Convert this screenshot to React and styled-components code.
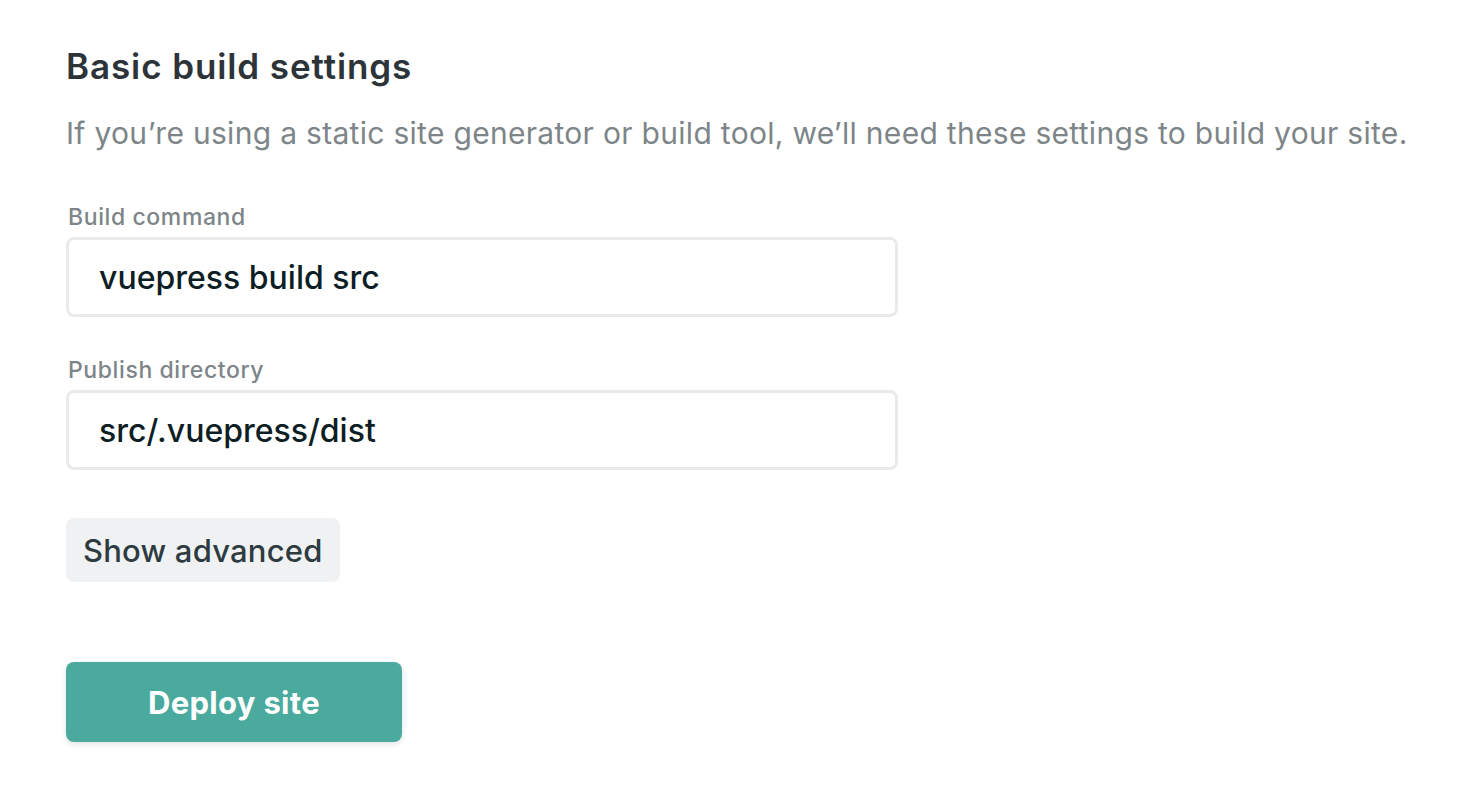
import styled, { createGlobalStyle } from 'styled-components';

const GlobalStyle = createGlobalStyle`
  body {
    margin: 0;
    background: #fff;
    font-family: Inter, 'Noto Sans', sans-serif;
  }
`;

const Page = styled.div`
  padding: 42px 66px;
`;

const Title = styled.h2`
  margin: 0;
  font-size: 35px;
  line-height: 48px;
  font-weight: 600;
  letter-spacing: 0.9px;
  color: #2d3439;
`;

const Lead = styled.p`
  margin: 23px 0 0;
  font-size: 30px;
  line-height: 40px;
  color: #7d8589;
  letter-spacing: 0.3px;
`;

const Field = styled.div`
  display: flex;
  flex-direction: column;
  margin-top: ${(p) => p.top}px;
`;

const Label = styled.label`
  font-size: 23px;
  line-height: 28px;
  font-weight: 500;
  letter-spacing: 0.6px;
  color: #7d8589;
  padding-left: 2px;
  margin-bottom: 6px;
`;

const Input = styled.input`
  box-sizing: border-box;
  width: 832px;
  height: 80px;
  border: 3px solid #e9ebeb;
  border-radius: 8px;
  padding: 0 30px;
  font-family: inherit;
  font-size: 32px;
  font-weight: 500;
  color: #0e1e25;
  outline: none;
`;

const Button = styled.button`
  display: block;
  border: none;
  border-radius: 8px;
  font-family: inherit;
  font-size: 31px;
  cursor: pointer;
`;

const GhostButton = styled(Button)`
  margin-top: 48px;
  height: 64px;
  padding: 0 17px;
  background: #f0f1f3;
  color: #2d3b41;
  font-weight: 500;
  letter-spacing: 0.2px;
`;

const PrimaryButton = styled(Button)`
  margin-top: 80px;
  width: 336px;
  height: 80px;
  background: #4aaa9e;
  color: #fff;
  font-weight: 700;
  letter-spacing: 0.3px;
  box-shadow: 0 2px 6px rgba(0, 0, 0, 0.12);
`;

export default function App() {
  return (
    <Page>
      <GlobalStyle />
      <Title>Basic build settings</Title>
      <Lead>
        If you’re using a static site generator or build tool, we’ll need these
        settings to build your site.
      </Lead>
      <Field top={50}>
        <Label>Build command</Label>
        <Input defaultValue='vuepress build src' />
      </Field>
      <Field top={39}>
        <Label>Publish directory</Label>
        <Input defaultValue='src/.vuepress/dist' />
      </Field>
      <GhostButton>Show advanced</GhostButton>
      <PrimaryButton>Deploy site</PrimaryButton>
    </Page>
  );
}
